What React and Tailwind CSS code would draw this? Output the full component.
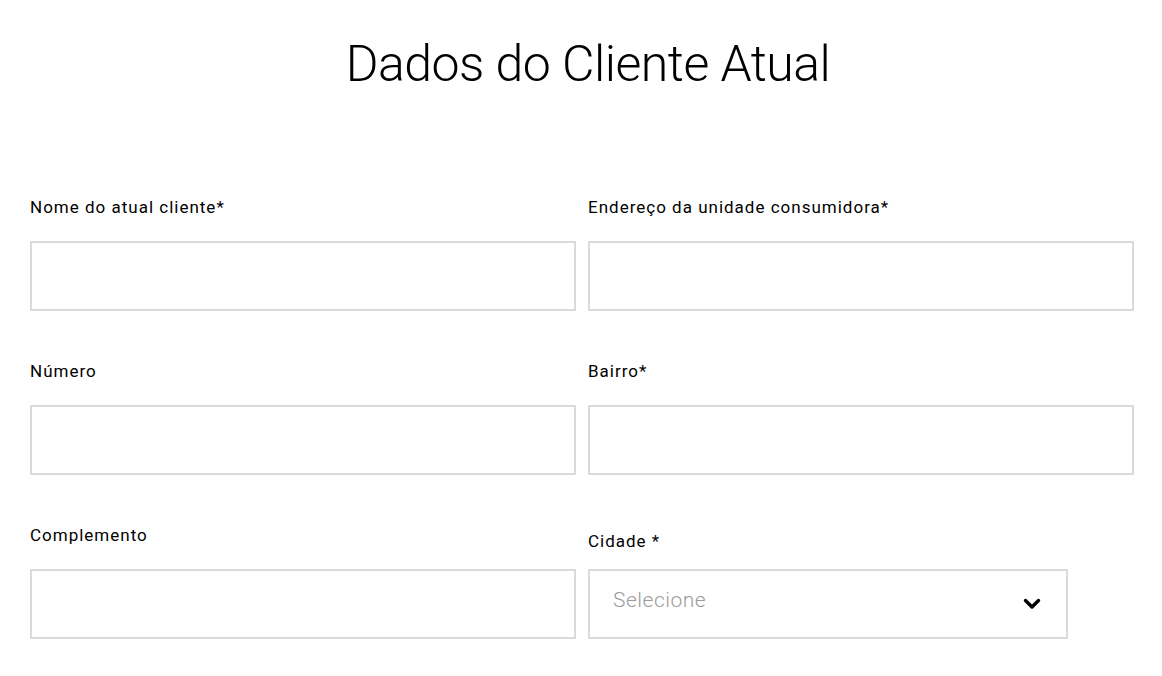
function Field({ label }) {
  return (
    <div className="flex flex-col">
      <label className="block text-[17px] leading-[24px] font-normal tracking-[1px] text-black mb-[22px]">
        {label}
      </label>
      <input
        type="text"
        className="w-full h-[70px] border-2 border-[#dadada] bg-white px-6 outline-none"
      />
    </div>
  );
}

export default function App() {
  return (
    <div
      className="min-h-screen bg-white text-black"
      style={{ fontFamily: "Roboto, 'Liberation Sans', sans-serif" }}
    >
      <div className="pl-[30px] pr-[28px] pt-[34px]">
        <h1 className="text-center text-[50px] leading-[60px] font-light tracking-[-0.5px] pl-[12px]">
          Dados do Cliente Atual
        </h1>

        <form className="grid grid-cols-2 gap-x-[12px] gap-y-[48px] mt-[101px]">
          <Field label="Nome do atual cliente*" />
          <Field label="Endereço da unidade consumidora*" />
          <Field label="Número" />
          <Field label="Bairro*" />
          <Field label="Complemento" />

          <div className="flex flex-col">
            <label className="block text-[17px] leading-[24px] font-normal tracking-[1px] text-black mt-[6px] mb-[16px]">
              Cidade *
            </label>
            <div className="w-[480px] h-[70px] border-2 border-[#dadada] bg-white flex items-center justify-between pl-[23px] pr-[25px] pb-[6px]">
              <span className="text-[21px] font-light tracking-[0.5px] text-[#9b9b9b]">
                Selecione
              </span>
              <svg width="18" height="12" viewBox="0 0 18 12" className="mt-[6px]">
                <polyline
                  points="2.5,2.5 9,9 15.5,2.5"
                  fill="none"
                  stroke="#000"
                  strokeWidth="3.4"
                  strokeLinecap="round"
                  strokeLinejoin="round"
                />
              </svg>
            </div>
          </div>
        </form>
      </div>
    </div>
  );
}
